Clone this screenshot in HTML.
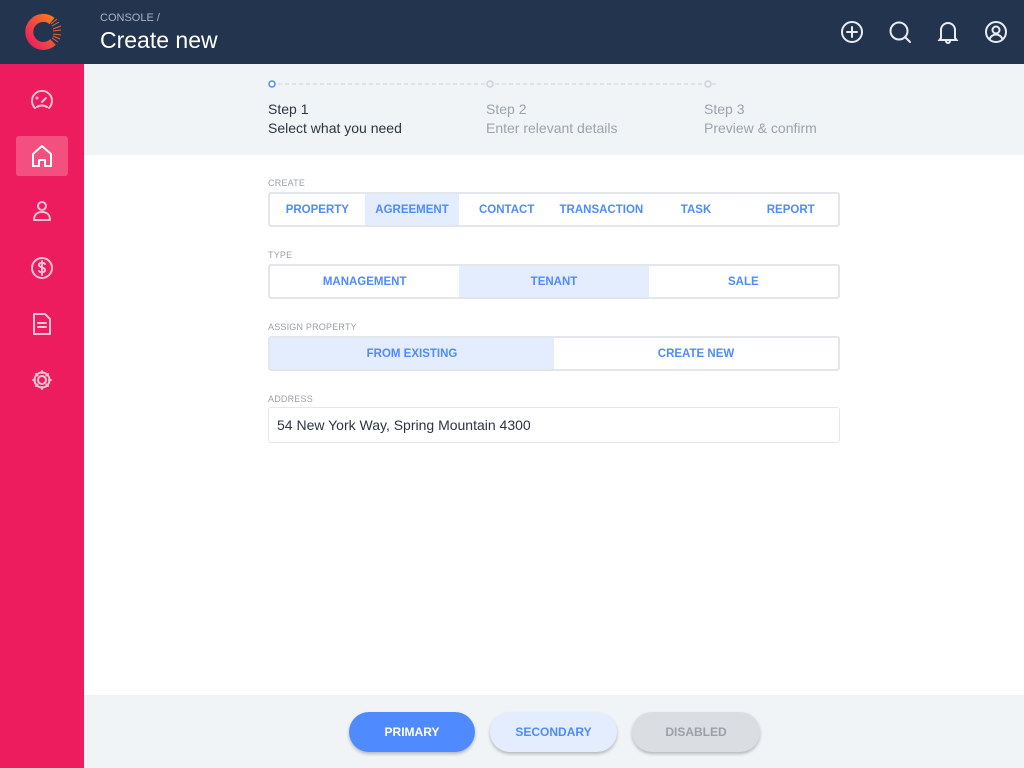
<!DOCTYPE html>
<html><head><style>
*{box-sizing:border-box;margin:0;padding:0}
body{width:1024px;height:768px;overflow:hidden;font-family:"Liberation Sans",sans-serif;background:#fff;position:relative}
.top{position:absolute;left:0;top:0;width:1024px;height:64px;background:#23344f}
.side{position:absolute;left:0;top:64px;width:84px;height:704px;background:#ec1c5f}
.abs{position:absolute}
.lbl{position:absolute;left:268px;font-size:9px;color:#9aa1aa;letter-spacing:.2px}
.seg{position:absolute;left:268px;width:572px;height:35px;border:2px solid #e3e6ea;border-radius:3px;display:flex;overflow:hidden}
.seg div{flex:1;display:flex;align-items:center;justify-content:center;font-size:11.5px;font-weight:bold;color:#4f8bff}
.seg .on{background:#e3edfd}
.btn{position:absolute;top:712px;height:40px;border-radius:20px;display:flex;align-items:center;justify-content:center;font-size:12px;font-weight:bold;box-shadow:0 2px 3px rgba(0,0,0,.25)}
</style></head><body>
<div class="top"></div>
<svg class="abs" style="left:22px;top:12px" width="40" height="40" viewBox="0 0 40 40">
<defs><linearGradient id="g" x1="0" y1="1" x2="1" y2="0"><stop offset="0" stop-color="#ec1c5f"/><stop offset="1" stop-color="#f47b20"/></linearGradient></defs>
<path d="M30 9 A14 14 0 1 0 31 30" fill="none" stroke="url(#g)" stroke-width="8"/>
<g stroke="#f0603a" stroke-width="1"><line x1="29" y1="12" x2="35" y2="7"/><line x1="30" y1="14" x2="37" y2="10"/><line x1="31" y1="17" x2="39" y2="14"/><line x1="31" y1="19" x2="39" y2="18"/><line x1="31" y1="22" x2="39" y2="23"/><line x1="31" y1="24" x2="38" y2="27"/><line x1="30" y1="26" x2="36" y2="30"/></g>
</svg>
<div class="abs" style="left:100px;top:12px;font-size:11px;color:#aab4c2">CONSOLE /</div>
<div class="abs" style="left:100px;top:27px;font-size:23px;color:#fff">Create new</div>
<svg class="abs" style="left:840px;top:20px" width="170" height="24" viewBox="0 0 170 24" fill="none" stroke="#e8ecf1" stroke-width="2" stroke-linecap="round">
<circle cx="12" cy="12" r="10"/><path d="M12 7v10M7 12h10"/>
<circle cx="59" cy="11" r="8.5"/><path d="M65 17l5 5"/>
<path d="M101 18V10a7 7 0 0 1 14 0v8l1.5 2h-17z"/><path d="M106 21a2 2 0 0 0 4 0"/>
<circle cx="156" cy="12" r="10"/><circle cx="156" cy="10" r="3.5"/><path d="M149.5 19.5c1-3.5 4-5 6.5-5s5.5 1.5 6.5 5"/>
</svg>
<div class="side"></div>
<div class="abs" style="left:16px;top:136px;width:52px;height:40px;background:#f4507f;border-radius:3px"></div>
<svg class="abs" style="left:28px;top:88px" width="28" height="310" viewBox="0 0 28 310" fill="none" stroke="#f9c2d5" stroke-width="2" stroke-linecap="round" stroke-linejoin="round">
<path d="M7 20a10 10 0 1 1 14 0"/><path d="M9 19c3-2 7-2 10 0"/><path d="M14 14l4-4"/><circle cx="9" cy="10" r=".5"/>
<path d="M5 78V66l9-8 9 8v12h-6v-6h-6v6z" stroke="#fff"/>
<circle cx="14" cy="118" r="4"/><path d="M6 132c0-6 4-8 8-8s8 2 8 8z"/>
<circle cx="14" cy="180" r="10"/><path d="M17 176c-1-1.5-6-2-6 1s6 2 6 5-5 2.5-6 1M14 173v14"/>
<path d="M6 226h11l5 5v15H6z"/><path d="M10 235h8M10 239h8"/>
<circle cx="14" cy="292" r="4"/><path d="M14 283v2M14 299v2M5 292h2M21 292h2M8 286l1.5 1.5M18.5 296.5l1.5 1.5M8 298l1.5-1.5M18.5 287.5l1.5-1.5"/><circle cx="14" cy="292" r="7.5"/>
</svg>
<div class="abs" style="left:84px;top:64px;width:940px;height:91px;background:#f1f4f7"></div>
<svg class="abs" style="left:266px;top:78px" width="450" height="12">
<line x1="12" y1="6" x2="450" y2="6" stroke="#cdd2d8" stroke-dasharray="4 3"/>
<circle cx="6" cy="6" r="3" fill="#fff" stroke="#4f8bff" stroke-width="1.5"/>
<circle cx="224" cy="6" r="3" fill="#f1f4f7" stroke="#cdd2d8" stroke-width="1.5"/>
<circle cx="442" cy="6" r="3" fill="#f1f4f7" stroke="#cdd2d8" stroke-width="1.5"/>
</svg>
<div class="abs" style="left:268px;top:100px;font-size:14px;line-height:19px;color:#2c3544">Step 1<br>Select what you need</div>
<div class="abs" style="left:486px;top:100px;font-size:14px;line-height:19px;color:#9ba3ad">Step 2<br>Enter relevant details</div>
<div class="abs" style="left:704px;top:100px;font-size:14px;line-height:19px;color:#9ba3ad">Step 3<br>Preview &amp; confirm</div>
<div class="lbl" style="top:178px">CREATE</div>
<div class="seg" style="top:192px"><div>PROPERTY</div><div class="on">AGREEMENT</div><div>CONTACT</div><div>TRANSACTION</div><div>TASK</div><div>REPORT</div></div>
<div class="lbl" style="top:250px">TYPE</div>
<div class="seg" style="top:264px"><div>MANAGEMENT</div><div class="on">TENANT</div><div>SALE</div></div>
<div class="lbl" style="top:322px">ASSIGN PROPERTY</div>
<div class="seg" style="top:336px"><div class="on">FROM EXISTING</div><div>CREATE NEW</div></div>
<div class="lbl" style="top:394px">ADDRESS</div>
<div class="abs" style="left:268px;top:407px;width:572px;height:36px;border:1px solid #e3e6ea;border-radius:3px;padding:9px 8px;font-size:14px;color:#2c3544">54 New York Way, Spring Mountain 4300</div>
<div class="abs" style="left:84px;top:695px;width:940px;height:73px;background:#f1f4f7"></div>
<div class="btn" style="left:349px;width:126px;background:#4f8bff;color:#fff">PRIMARY</div>
<div class="btn" style="left:490px;width:127px;background:#e3edfd;color:#4f8bff">SECONDARY</div>
<div class="btn" style="left:632px;width:128px;background:#dadde2;color:#9ba0a8">DISABLED</div>
</body></html>
